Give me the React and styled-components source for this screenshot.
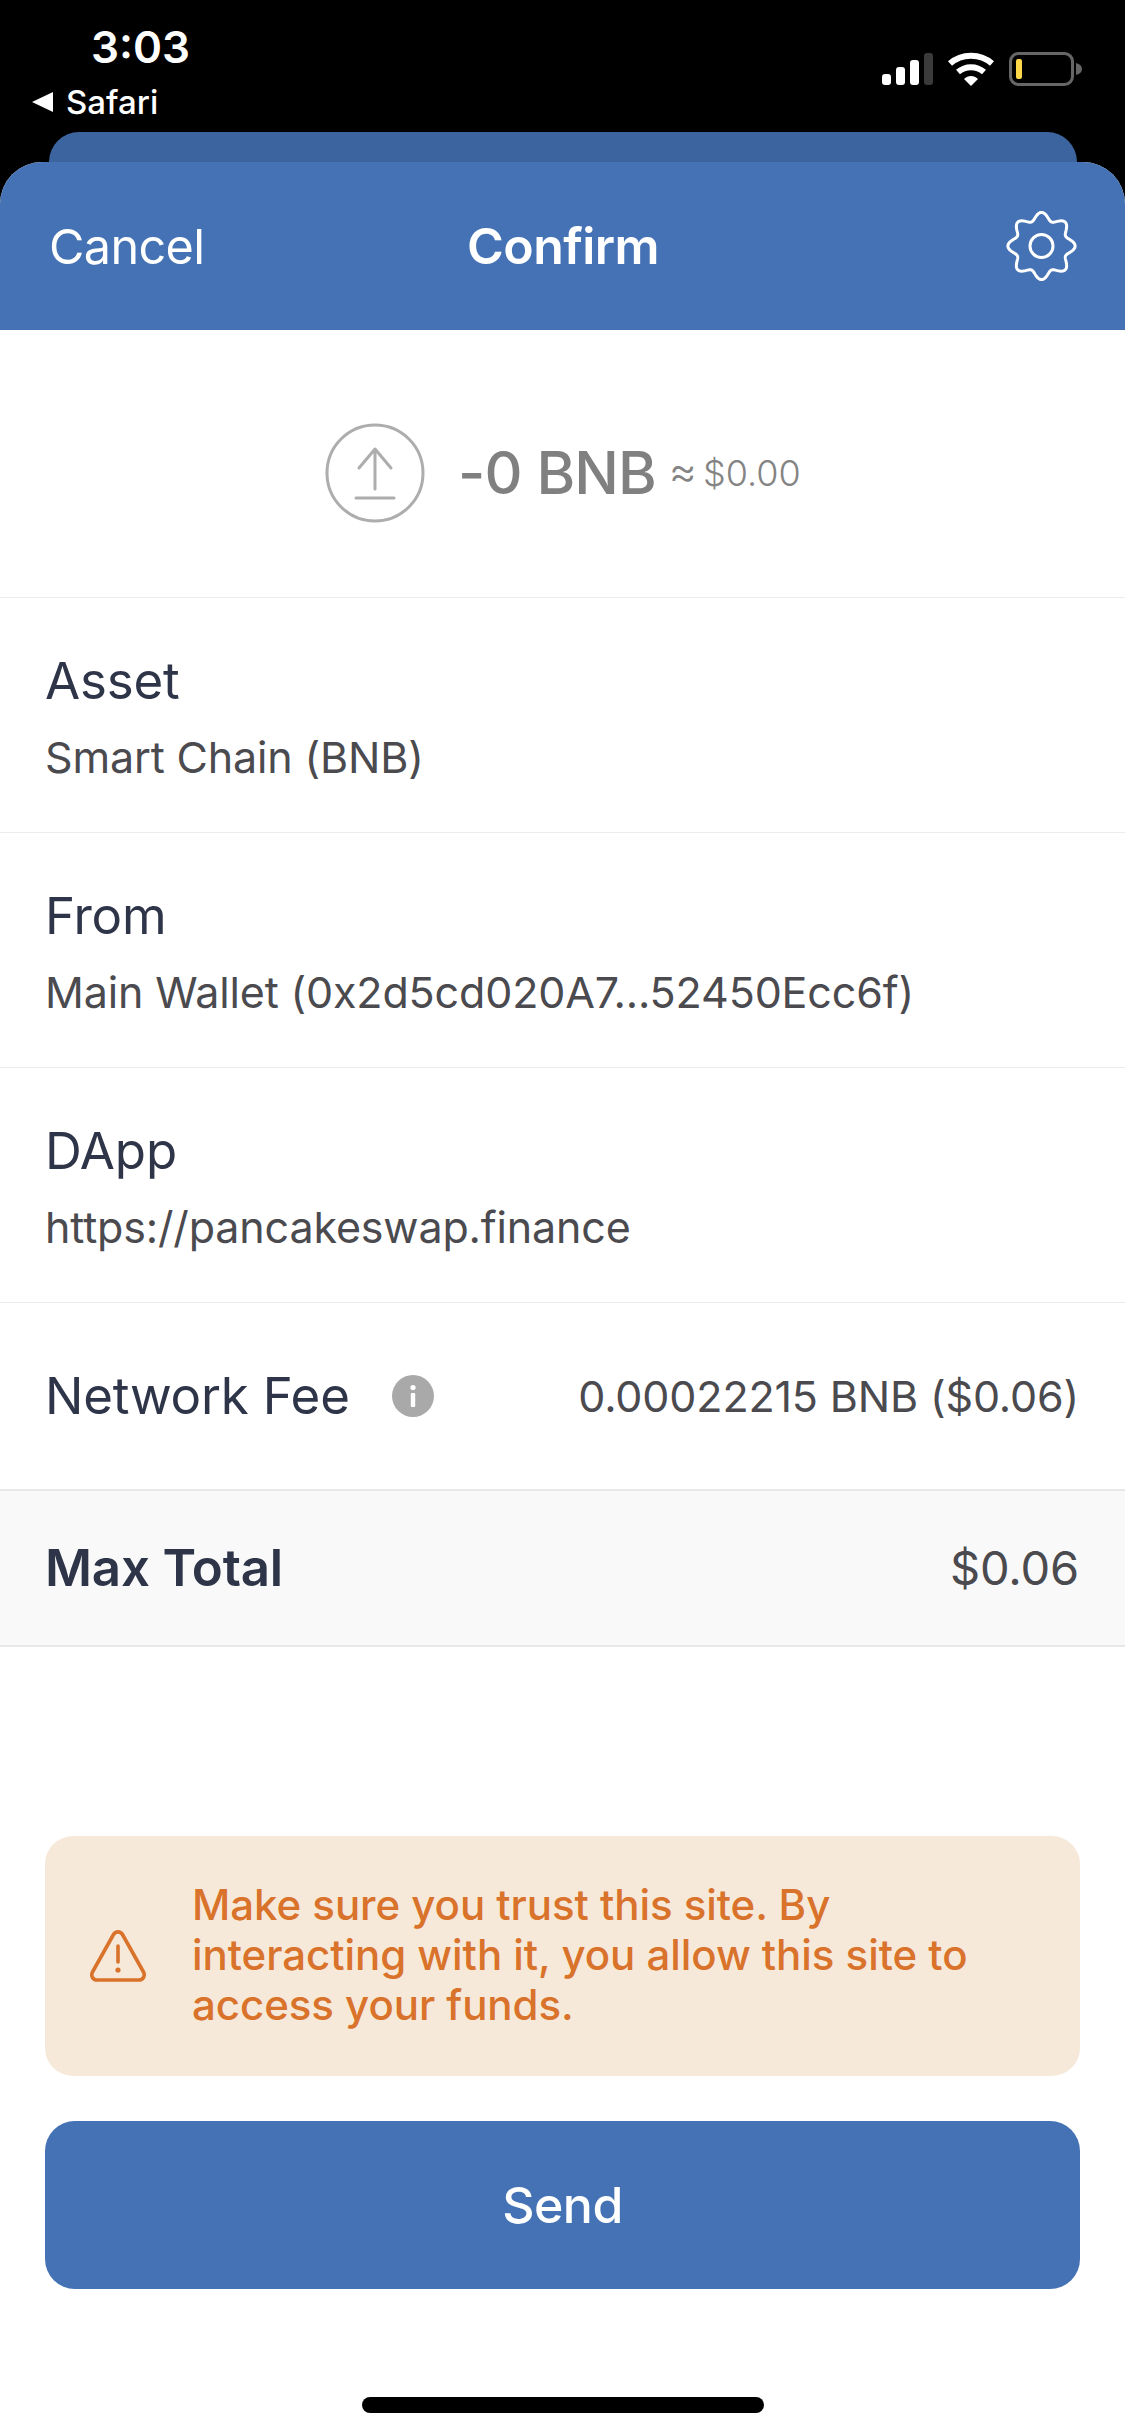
import React from "react";
import styled, { createGlobalStyle } from "styled-components";

const GlobalStyle = createGlobalStyle`
  html, body {
    margin: 0;
    padding: 0;
    background: #000;
  }
  * {
    box-sizing: border-box;
  }
`;

const Page = styled.div`
  width: 1125px;
  height: 2436px;
  display: flex;
  flex-direction: column;
  background: #000;
  font-family: Inter, "Liberation Sans", sans-serif;
  overflow: hidden;
`;

const StatusBar = styled.div`
  height: 132px;
  flex: none;
  display: flex;
  justify-content: space-between;
  padding: 24px 43px 0 32px;
  color: #fff;
`;

const StatusLeft = styled.div`
  display: flex;
  flex-direction: column;
`;

const Clock = styled.div`
  font-size: 44px;
  line-height: 46px;
  font-weight: 600;
  padding-left: 59px;
`;

const BackLink = styled.div`
  display: flex;
  align-items: center;
  gap: 13px;
  margin-top: 13px;
  font-size: 33px;
  line-height: 38px;
  font-weight: 500;
`;

const BackArrow = styled.span`
  width: 0;
  height: 0;
  border-top: 10px solid transparent;
  border-bottom: 10px solid transparent;
  border-right: 21px solid #fff;
`;

const StatusIcons = styled.div`
  display: flex;
  align-items: center;
  gap: 15px;
  height: 34px;
  margin-top: 28px;
`;

const BehindCard = styled.div`
  height: 30px;
  flex: none;
  margin: 0 48px 0 49px;
  background: #3c659f;
  border-radius: 30px 30px 0 0;
`;

const Sheet = styled.div`
  flex: 1;
  display: flex;
  flex-direction: column;
  background: #fff;
  border-radius: 42px 42px 0 0;
  overflow: hidden;
`;

const Header = styled.header`
  height: 168px;
  flex: none;
  display: flex;
  align-items: center;
  justify-content: space-between;
  padding: 0 48px 0 49px;
  background: #4472b4;
  color: #fff;
`;

const HeaderSide = styled.div`
  flex: 1;
  display: flex;
  justify-content: ${(p) => (p.$end ? "flex-end" : "flex-start")};
  font-size: 48.5px;
  letter-spacing: -0.6px;
  font-weight: 400;
`;

const Title = styled.h1`
  margin: 0;
  font-size: 50px;
  font-weight: 600;
  letter-spacing: -0.6px;
`;

const Hero = styled.div`
  height: 268px;
  flex: none;
  display: flex;
  align-items: center;
  padding: 18px 0 0 325px;
  border-bottom: 1px solid #ececec;
`;

const Amount = styled.span`
  margin-left: 33px;
  font-size: 59px;
  font-weight: 500;
  letter-spacing: -0.9px;
  color: #808080;
`;

const AmountFiat = styled.span`
  margin-left: 13px;
  font-size: 36px;
  font-weight: 300;
  color: #848484;
`;

const ApproxSign = styled.span`
  font-size: 43px;
  line-height: 36px;
  margin-right: -4px;
`;

const InfoRow = styled.div`
  height: 235px;
  flex: none;
  display: flex;
  flex-direction: column;
  justify-content: center;
  gap: 21px;
  padding: 2px 45px 0;
  border-bottom: 1px solid #ececec;
`;

const RowLabel = styled.div`
  font-size: 51px;
  line-height: 60px;
  font-weight: ${(p) => (p.$bold ? 600 : 400)};
  letter-spacing: -0.2px;
  color: #2f3549;
`;

const RowValue = styled.div`
  font-size: ${(p) => p.$size || 43}px;
  line-height: 50px;
  font-weight: 400;
  letter-spacing: -0.15px;
  color: #4a4a4f;
  white-space: nowrap;
`;

const SplitRow = styled.div`
  height: ${(p) => p.$height}px;
  flex: none;
  display: flex;
  align-items: center;
  justify-content: space-between;
  padding: 0 46px 0 45px;
  background: ${(p) => p.$bg || "#fff"};
  border-bottom: 2px solid #e8e8e8;
`;

const FeeLabel = styled.div`
  display: flex;
  align-items: center;
  gap: 42px;
`;

const Spacer = styled.div`
  flex: 1;
`;

const Notice = styled.div`
  height: 240px;
  flex: none;
  margin: 0 45px;
  display: flex;
  align-items: center;
  gap: 45px;
  padding: 0 44px 2px;
  background: #f6e9da;
  border-radius: 28px;
`;

const NoticeIcon = styled.svg`
  flex: none;
  margin-top: 2px;
`;

const NoticeText = styled.p`
  margin: 0;
  width: 800px;
  font-size: 42px;
  line-height: 50px;
  font-weight: 450;
  letter-spacing: -0.05px;
  color: #d9722a;
`;

const SendButton = styled.button`
  height: 168px;
  flex: none;
  margin: 45px 45px 0;
  border: none;
  border-radius: 30px;
  background: #4472b4;
  color: #fff;
  font-family: inherit;
  font-size: 50px;
  font-weight: 500;
  letter-spacing: -0.5px;
`;

const HomeBarArea = styled.div`
  height: 147px;
  flex: none;
  display: flex;
  justify-content: center;
  padding-top: 108px;
`;

const HomeBar = styled.div`
  width: 402px;
  height: 16px;
  background: #000;
  border-radius: 8px;
`;

// eight soft lobes around a circle, closed as one polyline
function gearOutline(cx, cy) {
  const pts = [];
  for (let i = 0; i < 240; i++) {
    const t = (i / 240) * Math.PI * 2;
    const r = 29.8 + 3.8 * Math.cos(8 * t);
    pts.push(`${(cx + r * Math.sin(t)).toFixed(2)},${(cy - r * Math.cos(t)).toFixed(2)}`);
  }
  return pts.join(" ");
}

const SignalIcon = () => (
  <svg width="51" height="32" viewBox="0 0 51 32">
    <rect x="0" y="21" width="9" height="11" rx="3" fill="#fff" />
    <rect x="14" y="14" width="9" height="18" rx="3" fill="#fff" />
    <rect x="28" y="7" width="9" height="25" rx="3" fill="#fff" />
    <rect x="42" y="0" width="9" height="32" rx="3" fill="#3a3a3a" />
  </svg>
);

const WifiIcon = () => (
  <svg width="46" height="34" viewBox="0 0 46 34">
    <path d="M2 11.500C13.500 1 32.500 1 44 11.500" fill="none" stroke="#fff" strokeWidth="6" />
    <path d="M10 20C17.500 13.500 28.500 13.500 36 20" fill="none" stroke="#fff" strokeWidth="6" />
    <path d="M16 27C20 23 26 23 30 27L23 34Z" fill="#fff" />
  </svg>
);

const BatteryIcon = () => (
  <svg width="73" height="34" viewBox="0 0 73 34">
    <rect x="1.500" y="1.500" width="62" height="31" rx="8" fill="none" stroke="#666" strokeWidth="3" />
    <rect x="7" y="7" width="6" height="20" rx="2" fill="#ffd84a" />
    <path d="M67 11C71 12 73 14 73 17C73 20 71 22 67 23Z" fill="#666" />
  </svg>
);

const GearIcon = () => (
  <svg width="71" height="72" viewBox="0 0 71 72">
    <polygon points={gearOutline(35.5, 36)} fill="none" stroke="#fff" strokeWidth="3" strokeLinejoin="round" />
    <circle cx="35.500" cy="36" r="11.500" fill="none" stroke="#fff" strokeWidth="3" />
  </svg>
);

const UploadIcon = () => (
  <svg width="100" height="100" viewBox="0 0 100 100">
    <circle cx="50" cy="50" r="48" fill="none" stroke="#adadad" strokeWidth="3" />
    <path d="M50 66V27M34 45L50 26L66 45" fill="none" stroke="#adadad" strokeWidth="3" strokeLinecap="round" strokeLinejoin="round" />
    <path d="M31 75H69" fill="none" stroke="#adadad" strokeWidth="3" strokeLinecap="round" />
  </svg>
);

const InfoIcon = () => (
  <svg width="42" height="42" viewBox="0 0 42 42">
    <circle cx="21" cy="21" r="21" fill="#a9a9a9" />
    <circle cx="21" cy="12.500" r="2.600" fill="#fff" />
    <rect x="18.800" y="18" width="4.400" height="14" rx="1" fill="#fff" />
  </svg>
);

const WarningIcon = () => (
  <NoticeIcon width="58" height="54" viewBox="0 0 58 54">
    <path
      d="M24.500 5.500C26.500 2 31.500 2 33.500 5.500L54.500 43C56.500 47 54 51 50 51H8C4 51 1.500 47 3.500 43Z"
      fill="none"
      stroke="#d9722a"
      strokeWidth="3.600"
      strokeLinejoin="round"
    />
    <path d="M29 17V33" fill="none" stroke="#d9722a" strokeWidth="3.600" strokeLinecap="round" />
    <circle cx="29" cy="41" r="2.600" fill="#d9722a" />
  </NoticeIcon>
);

export default function App() {
  return (
    <Page>
      <GlobalStyle />
      <StatusBar>
        <StatusLeft>
          <Clock>3:03</Clock>
          <BackLink>
            <BackArrow />
            Safari
          </BackLink>
        </StatusLeft>
        <StatusIcons>
          <SignalIcon />
          <WifiIcon />
          <BatteryIcon />
        </StatusIcons>
      </StatusBar>
      <BehindCard />
      <Sheet>
        <Header>
          <HeaderSide>Cancel</HeaderSide>
          <Title>Confirm</Title>
          <HeaderSide $end>
            <GearIcon />
          </HeaderSide>
        </Header>
        <Hero>
          <UploadIcon />
          <Amount>-0 BNB</Amount>
          <AmountFiat>
            <ApproxSign>≈</ApproxSign> $0.00
          </AmountFiat>
        </Hero>
        <InfoRow>
          <RowLabel>Asset</RowLabel>
          <RowValue>Smart Chain (BNB)</RowValue>
        </InfoRow>
        <InfoRow>
          <RowLabel>From</RowLabel>
          <RowValue>Main Wallet (0x2d5cd020A7...52450Ecc6f)</RowValue>
        </InfoRow>
        <InfoRow>
          <RowLabel>DApp</RowLabel>
          <RowValue>https://pancakeswap.finance</RowValue>
        </InfoRow>
        <SplitRow $height={188}>
          <FeeLabel>
            <RowLabel>Network Fee</RowLabel>
            <InfoIcon />
          </FeeLabel>
          <RowValue>0.00022215 BNB ($0.06)</RowValue>
        </SplitRow>
        <SplitRow $height={156} $bg="#f9f9f9">
          <RowLabel $bold>Max Total</RowLabel>
          <RowValue $size={47}>$0.06</RowValue>
        </SplitRow>
        <Spacer />
        <Notice>
          <WarningIcon />
          <NoticeText>
            Make sure you trust this site. By interacting with it, you allow this site to access your funds.
          </NoticeText>
        </Notice>
        <SendButton>Send</SendButton>
        <HomeBarArea>
          <HomeBar />
        </HomeBarArea>
      </Sheet>
    </Page>
  );
}
